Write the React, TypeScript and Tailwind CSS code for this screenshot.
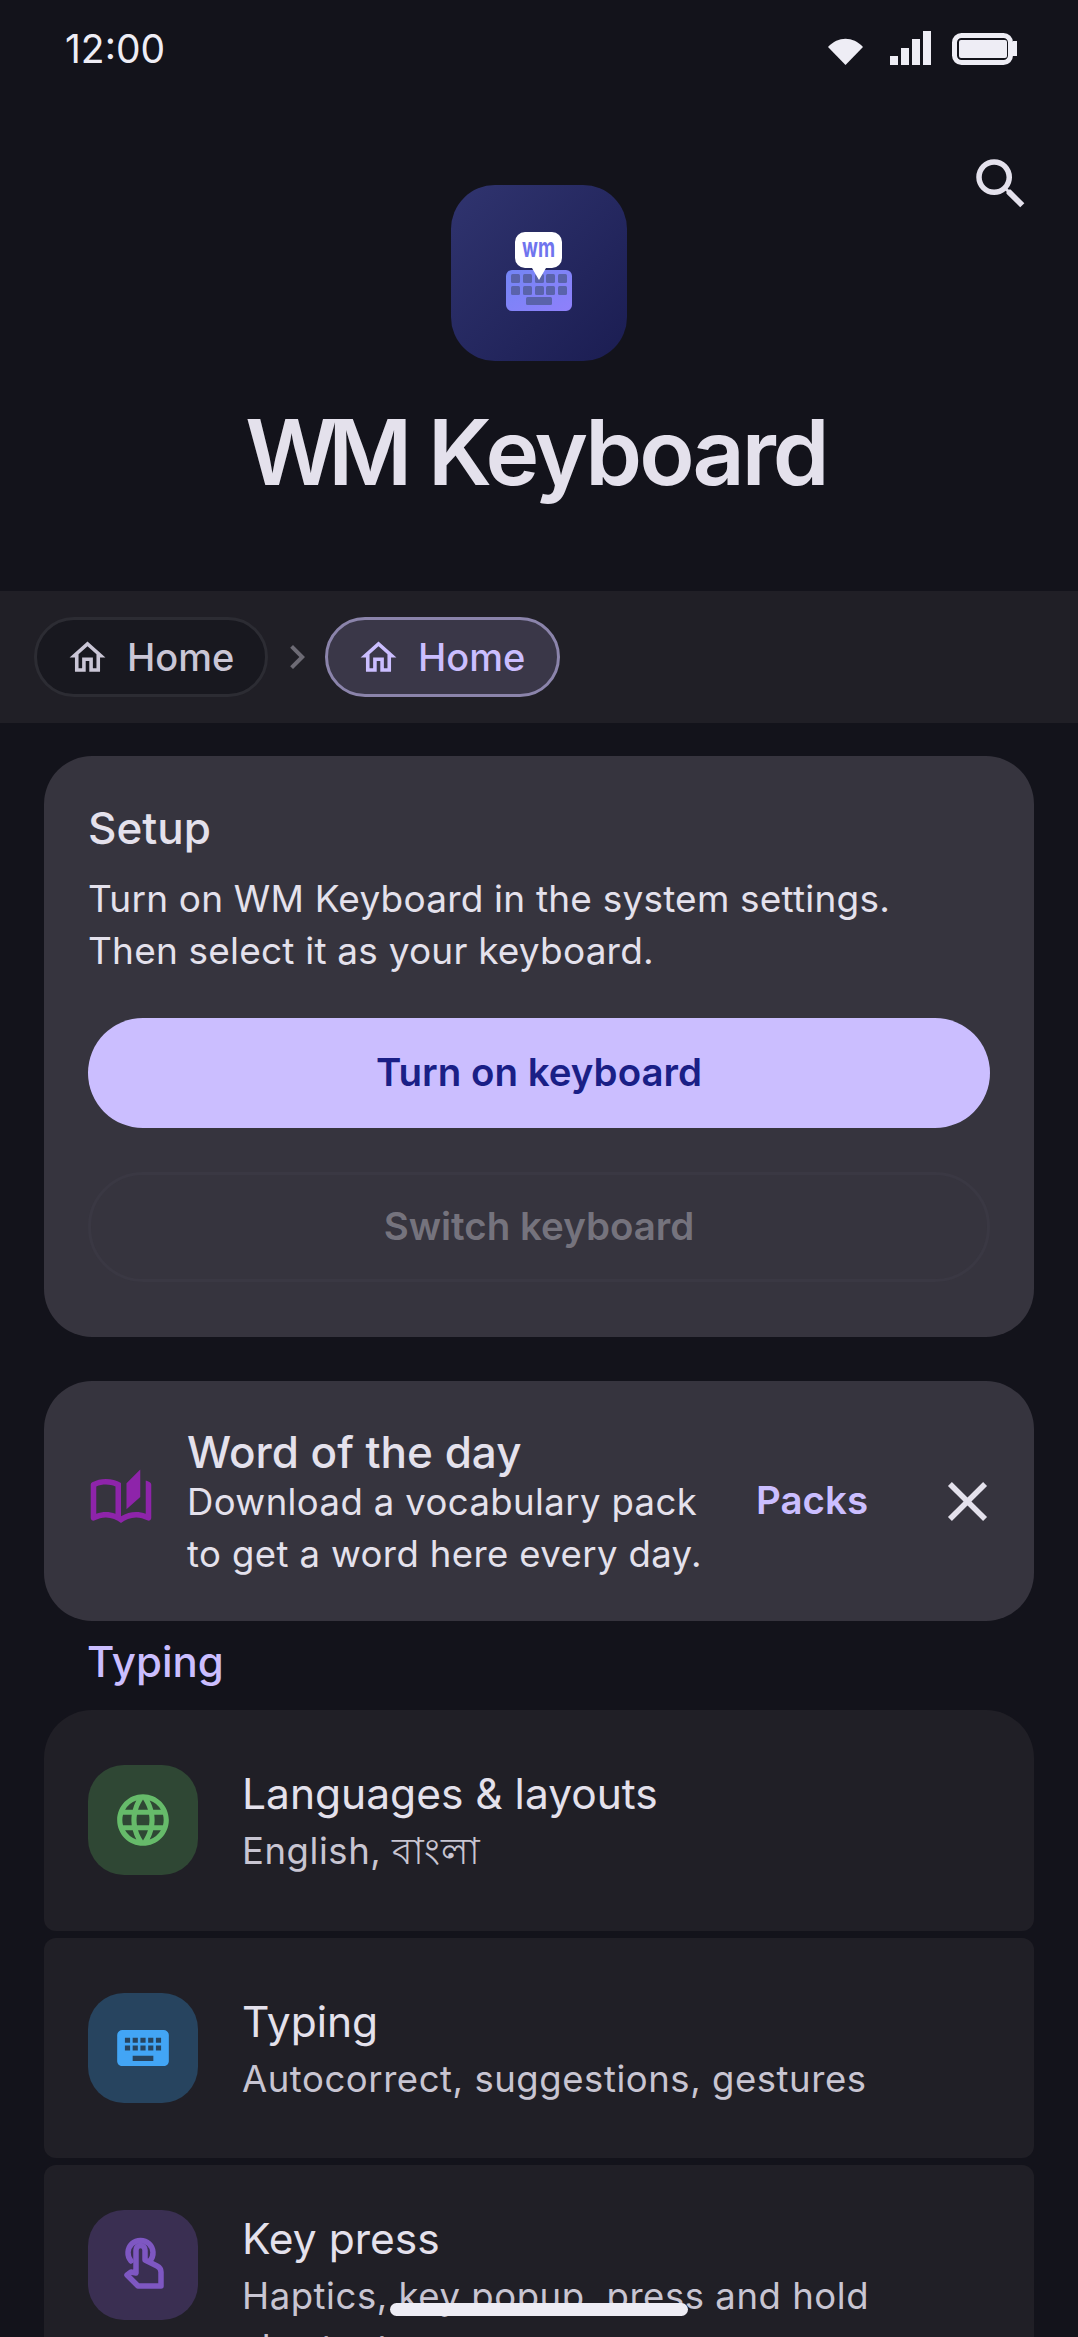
import type { ReactNode } from "react";
import {
  MdChevronRight,
  MdClose,
  MdKeyboard,
  MdLanguage,
  MdOutlineAutoStories,
  MdOutlineHome,
  MdSearch,
} from "react-icons/md";

function StatusIcons() {
  return (
    <svg width="190" height="36" viewBox="0 0 190 36" fill="#eeedf5">
      <path d="M0 16 C 10 5, 25 5, 35 16 L 17.5 34 Z" />
      <path d="M62 25h8v9h-8zM73 17h8v17h-8zM84 8h8v26h-8zM95 0h8v34h-8z" />
      <rect x="126.5" y="4.5" width="56" height="27" rx="7" fill="none" stroke="#eeedf5" strokeWidth="5" />
      <rect x="131" y="9" width="48" height="18" rx="2" />
      <rect x="185" y="10" width="4" height="15" />
    </svg>
  );
}

function TouchIcon() {
  return (
    <svg width="70" height="80" viewBox="0 0 70 80" fill="none" stroke="#7e57c2" strokeWidth="5.5" strokeLinejoin="round" strokeLinecap="round">
      <path d="M23 36a12.5 12.5 0 1 1 19 0" />
      <path d="M28 48V25a4.5 4.5 0 0 1 9 0v10l12 6q4 2 4 6v14H30L19 50l4-3z" />
    </svg>
  );
}

function AppLogo() {
  const keyX = [60, 72, 84, 95, 107];
  return (
    <div className="h-[176px] w-[176px] rounded-[44px] bg-linear-to-br from-[#30346f] to-[#1b1d52]">
      <svg width="176" height="176" viewBox="0 0 176 176">
        <defs>
          <linearGradient id="kb" x1="0" y1="0" x2="1" y2="1">
            <stop offset="0" stopColor="#7385f5" />
            <stop offset="1" stopColor="#8f80fb" />
          </linearGradient>
        </defs>
        <rect x="55" y="85" width="66" height="41" rx="6" fill="url(#kb)" />
        {keyX.map(x => (
          <g key={x} fill="#5a63ab">
            <rect x={x} y="89" width="9" height="9" rx="1.5" />
            <rect x={x} y="101" width="9" height="9" rx="1.5" />
          </g>
        ))}
        <rect x="75" y="112" width="26" height="8" rx="1.5" fill="#5a63ab" />
        <path d="M74 47h27a10 10 0 0 1 10 10v16a10 10 0 0 1-10 10h-6l-7 12-7-12h-7a10 10 0 0 1-10-10V57a10 10 0 0 1 10-10z" fill="#fff" />
        <text x="71" y="72" textLength="33" lengthAdjust="spacingAndGlyphs" fontSize="27" fontWeight="700" fill="#6f74ee" fontFamily="Inter, sans-serif">
          wm
        </text>
      </svg>
    </div>
  );
}

function Crumb({ active }: { active?: boolean }) {
  return (
    <div
      className={
        active
          ? "flex h-[80px] w-[235px] items-center rounded-full border-[3px] border-[#8b84ab] bg-[#3a3748] pl-[29px] text-[#cbbeff]"
          : "flex h-[80px] w-[234px] items-center rounded-full border-[3px] border-[#2c2c33] bg-[#18181f] pl-[29px] text-[#cac6d6]"
      }
    >
      <MdOutlineHome className="h-[43px] w-[43px]" />
      <span className="ml-[18px] text-[38px] font-medium">Home</span>
    </div>
  );
}

function SettingsRow({
  tile,
  icon,
  title,
  sub,
  rowClass,
}: {
  tile: string;
  icon: ReactNode;
  title: string;
  sub: string;
  rowClass: string;
}) {
  return (
    <div className={`flex items-start bg-[#201f26] px-[44px] ${rowClass}`}>
      <div className={`flex h-[110px] w-[110px] shrink-0 items-center justify-center rounded-[36px] ${tile}`}>{icon}</div>
      <div className="ml-[44px] min-w-0">
        <div className="text-[42.5px] leading-[58px] text-[#e4e1ec]">{title}</div>
        <div className="mt-[2px] text-[36.5px] leading-[52px] tracking-[0.55px] text-[#c8c5d2]">{sub}</div>
      </div>
    </div>
  );
}

export default function App() {
  return (
    <div className="relative h-[2337px] w-[1078px] overflow-hidden bg-[#13131b] font-['Inter','Noto_Sans',sans-serif]">
      <div className="flex h-[96px] items-center justify-between pl-[65px] pr-[60px]">
        <span className="text-[39px] leading-none text-[#eeedf5]">12:00</span>
        <div className="mt-[2px]">
          <StatusIcons />
        </div>
      </div>

      <header className="relative flex h-[495px] flex-col items-center pt-[89px]">
        <AppLogo />
        <h1 className="mt-[36px] pr-[6px] text-[91px] font-semibold leading-[110px] tracking-[-3px] text-[#e4e1ec]">
          <span className="mr-[6px] tracking-[-10px]">WM</span> Keyboard
        </h1>
        <MdSearch className="absolute left-[968px] top-[55px] h-[66px] w-[66px] text-[#e4e1ec]" />
      </header>

      <nav className="flex h-[132px] items-center bg-[#201f26] pl-[34px]">
        <Crumb />
        <MdChevronRight className="ml-[5px] mr-[4px] h-[48px] w-[48px] text-[#6d6b75]" />
        <Crumb active />
      </nav>

      <main className="px-[44px] pt-[33px]">
        <section className="h-[581px] rounded-[48px] bg-[#36343e] px-[44px] pt-[44px]">
          <h2 className="text-[44px] font-medium leading-[56px] text-[#e4e1ec]">Setup</h2>
          <p className="mt-[17px] text-[37px] leading-[52px] tracking-[0.2px] text-[#e4e1ec]">
            Turn on WM Keyboard in the system settings.
            <br />
            Then select it as your keyboard.
          </p>
          <button className="mt-[41px] block h-[110px] w-full rounded-full bg-[#cbbeff] text-[38.5px] font-semibold text-[#1a1f86]">
            Turn on keyboard
          </button>
          <button className="mt-[44px] block h-[110px] w-full rounded-full border-[3px] border-[#3a3843] text-[38.5px] font-semibold text-[#75737d]">
            Switch keyboard
          </button>
        </section>

        <section className="mt-[44px] flex h-[240px] items-center rounded-[48px] bg-[#36343e] pl-[44px] pr-[33px]">
          <MdOutlineAutoStories className="h-[66px] w-[66px] shrink-0 text-[#8e24aa]" />
          <div className="ml-[33px] w-[520px] shrink-0 pt-[6px]">
            <h3 className="text-[44px] font-medium leading-[48px] text-[#e4e1ec]">Word of the day</h3>
            <p className="text-[36.5px] leading-[52px] tracking-[0.4px] text-[#e4e1ec]">
              Download a vocabulary pack
              <br />
              to get a word here every day.
            </p>
          </div>
          <span className="ml-[49px] text-[38.5px] font-semibold text-[#cbbeff]">Packs</span>
          <MdClose className="ml-auto h-[67px] w-[67px] text-[#e4e1ec]" />
        </section>

        <h4 className="mt-[19px] pl-[43px] text-[42px] font-medium leading-[44px] text-[#cbbeff]">Typing</h4>

        <div className="mt-[26px] flex flex-col gap-[7px]">
          <SettingsRow
            rowClass="h-[221px] rounded-t-[48px] rounded-b-[12px] pt-[55px]"
            tile="bg-[#2f4734]"
            icon={<MdLanguage className="h-[62px] w-[62px] text-[#66bb6a]" />}
            title="Languages & layouts"
            sub="English, বাংলা"
          />
          <SettingsRow
            rowClass="h-[220px] rounded-[12px] pt-[55px]"
            tile="bg-[#27445f]"
            icon={<MdKeyboard className="h-[62px] w-[62px] text-[#42a5f5]" />}
            title="Typing"
            sub="Autocorrect, suggestions, gestures"
          />
          <SettingsRow
            rowClass="h-[300px] rounded-[12px] pt-[45px]"
            tile="bg-[#3a2f52]"
            icon={<TouchIcon />}
            title="Key press"
            sub="Haptics, key popup, press and hold shortcuts"
          />
        </div>
      </main>

      <div className="absolute left-[390px] top-[2303px] h-[13px] w-[298px] rounded-full bg-[#eeedf5]" />
    </div>
  );
}
